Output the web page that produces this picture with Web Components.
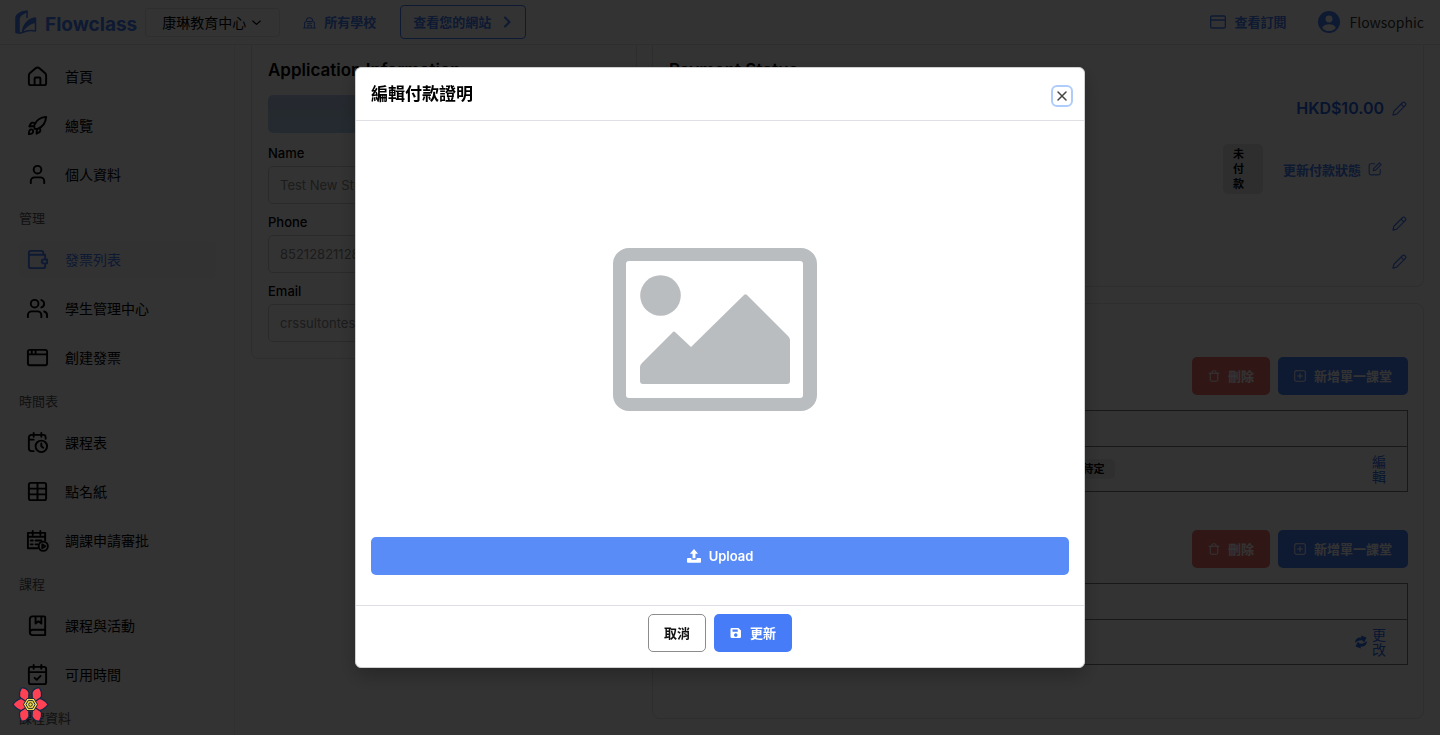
<!DOCTYPE html>
<html lang="zh-Hant">
<head>
<meta charset="utf-8">
<meta name="viewport" content="width=device-width, initial-scale=1">
<title>Flowclass</title>
<style>
  html, body { margin: 0; height: 100%; }
  body {
    overflow: hidden; background: #fff; color: #000;
    font-family: Inter, "Noto Sans CJK TC", sans-serif; font-size: 13px;
    --blue: #467cf7; --line: #e2e4e8;
  }
</style>
</head>
<body>
<fc-app></fc-app>
<script>
const ICONS = {
  home: '<path d="M3 11a3.500 3.500 0 0 1 1.200-2.700l5.500-4.700a3.500 3.500 0 0 1 4.600 0l5.500 4.700A3.500 3.500 0 0 1 21 11v8a2 2 0 0 1-2 2H5a2 2 0 0 1-2-2zM9 21v-7a1 1 0 0 1 1-1h4a1 1 0 0 1 1 1v7"/>',
  rocket: '<path d="M9 15.500 8.500 12C10 8 14 3.500 21 3c-.5 7-5 11-9 12.500L9 15.500zM9 9.500c-2-1-4-.5-4.500 1.500L3.500 13l5-.5M14.500 15c1 2 .5 4-1.500 4.500L11 20.500l.5-5M3 21c0-3 .5-5 2.500-5S8 18 7 19.500 4.500 20.800 3 21z"/>',
  user: '<circle cx="12" cy="7" r="4"/><path d="M5 21v-2a4 4 0 0 1 4-4h6a4 4 0 0 1 4 4v2"/>',
  wallet: '<path d="M20 11V7H3v12a2 2 0 0 0 2 2h13a2 2 0 0 0 2-2v-2M3 7V5a2 2 0 0 1 2-2h11a2 2 0 0 1 2 2v2M22 12h-3.500a2 2 0 0 0 0 4H22z"/>',
  users: '<circle cx="9" cy="7" r="4"/><path d="M2 21v-2a4 4 0 0 1 4-4h6a4 4 0 0 1 4 4v2M16 3.200a4 4 0 0 1 0 7.700M22 21v-2a4 4 0 0 0-3-3.900"/>',
  window: '<rect x="2" y="4" width="20" height="16" rx="2"/><path d="M2 8.700h20M6 4v4.500M10 4v4.500"/>',
  caltime: '<path d="M8 21H6a3 3 0 0 1-3-3V7a3 3 0 0 1 3-3h12a2.500 2.500 0 0 1 2.500 2.500V8M8 2v4M16 2v4M3 9h5"/><circle cx="16" cy="16" r="6"/><path d="M16 13v3l2 1.500"/>',
  table: '<rect x="3" y="3" width="18" height="18" rx="2"/><path d="M3 9h18M3 15h18M12 3v18"/>',
  calplay: '<path d="M12 20H2V4h18v8M2 8h18M7 2v4M15 2v4M5 12h2M10 12h6M5 16h2M10 16h2"/><circle cx="18" cy="18" r="4.800"/><path d="M17 16l3 2-3 2z"/>',
  book: '<path d="M20 16V3.500a1 1 0 0 0-1-1H7a3 3 0 0 0-3 3V19a3 3 0 0 0 3 3h13v-5.500H7a3 3 0 0 0-3 2.500M10 3v7l3-2.500 3 2.500V3"/>',
  calcheck: '<rect x="3" y="4" width="18" height="18" rx="2"/><path d="M3 9.500h18M8 2v4M16 2v4M9 15.500l2.200 2 4-4"/>',
  school: '<path d="M1 22h22M3 22V12l3-2c0-9 12-9 12 0l3 2v10M9 22v-5h6v5M8 10h8M8 13.500h8"/>',
  right: '<path d="M8 3l9 9-9 9"/>',
  down: '<path d="M2 8l10 9 10-9"/>',
  card: '<rect x="1" y="3" width="22" height="18" rx="2"/><path d="M2 9h20"/>',
  avatar: '<circle cx="12" cy="12" r="12" fill="currentColor" stroke="none"/><circle cx="12" cy="8.800" r="3.800" fill="#fff" stroke="none"/><path d="M4.500 18.500c1.500-3 4-4 7.500-4s6 1 7.500 4a10 10 0 0 1-15 0z" fill="#fff" stroke="none"/>',
  pencil: '<path d="M1.500 22.500l1.500-6L17 2.500a2.300 2.300 0 0 1 3.300 0l1.200 1.200a2.300 2.300 0 0 1 0 3.300L7.500 21zM14.500 5l4.500 4.500"/>',
  edit: '<path d="M11 3H5a3 3 0 0 0-3 3v13a3 3 0 0 0 3 3h13a3 3 0 0 0 3-3v-6M9 15l1-4 9.500-9.500 3 3L13 14z"/>',
  trash: '<path d="M2 6.500h20M4.500 6.500V20a2.500 2.500 0 0 0 2.500 2.500h10a2.500 2.500 0 0 0 2.500-2.500V6.500M8 6V4a2.500 2.500 0 0 1 2.500-2.500h3A2.500 2.500 0 0 1 16 4v2"/>',
  plus: '<rect x="1.500" y="1.500" width="21" height="21" rx="2.500"/><path d="M12 7v10M7 12h10"/>',
  x: '<path d="M4 4l16 16M20 4L4 20"/>',
  sync: '<g fill="currentColor" stroke="none"><path d="M0 14C0 6 6 2 13 3L12-1l11 4-5 10-3-4C9 8 5 10 0 14z"/><path d="M24 10c0 8-6 12-13 11l1 4-11-4 5-10 3 4c6 1 10-1 15-5z"/></g>',
  upload: '<g fill="currentColor" stroke="none"><path d="M12 0 5 8h4.500v8h5V8H19z"/><path d="M1.500 15.500H7.500V17a1.500 1.500 0 0 0 1.500 1.500h6a1.500 1.500 0 0 0 1.500-1.500v-1.500h6A1.500 1.500 0 0 1 24 17v5a1.500 1.500 0 0 1-1.500 1.500h-21A1.500 1.500 0 0 1 0 22v-5a1.500 1.500 0 0 1 1.500-1.500z"/></g>',
  save: '<path fill="currentColor" stroke="none" fill-rule="evenodd" d="M3.500 2H17l5 5v12.500a2.500 2.500 0 0 1-2.500 2.500h-16A2.500 2.500 0 0 1 1 19.500v-15A2.500 2.500 0 0 1 3.500 2zM5 5v4.500h10.500V5zM11.500 12.500a3.500 3.500 0 1 0 .1 0z"/>'
};

const make = (host, html) => {
  const t = document.createElement('template');
  t.innerHTML = html;
  host.attachShadow({ mode: 'open' }).append(t.content.cloneNode(true));
};
const define = (name, html) => customElements.define(name, class extends HTMLElement {
  constructor() { super(); make(this, typeof html === 'function' ? html(this) : html); }
});

customElements.define('fc-icon', class extends HTMLElement {
  connectedCallback() {
    if (this.shadowRoot) return;
    const s = this.getAttribute('size') || 24, w = this.getAttribute('weight') || 2;
    make(this, `<style>:host{display:inline-flex;flex:none}svg{display:block;overflow:visible}</style>
      <svg width="${s}" height="${s}" viewBox="0 0 24 24" fill="none" stroke="currentColor" stroke-width="${w}" stroke-linecap="round" stroke-linejoin="round" aria-hidden="true">${ICONS[this.getAttribute('name')]}</svg>`);
  }
});

/* Button; the variant attribute picks its colours. */
define('fc-button', `<style>
  :host { display: block; }
  button { box-sizing: border-box; width: 100%; height: 38px; padding: 0 15px; border: 1px solid transparent; border-radius: 5px;
    display: flex; align-items: center; justify-content: center; gap: 8px; font: inherit; font-weight: 600; font-size: 13px;
    line-height: 20px; color: #fff; background: var(--blue); white-space: nowrap; }
  :host([variant=danger]) button { background: #ee7370; }
  :host([variant=plain]) button { background: #fff; border-color: #8c8c8c; color: #111; }
  :host([variant=soft]) button { background: #5a8cf8; }
  :host([variant=outline]) button { height: 34px; padding: 0 12px; gap: 10px; background: none; border-color: var(--blue); color: var(--blue); border-radius: 4px; }
</style><button type="button"><slot></slot></button>`);

define('fc-header', `<style>
  :host { display: flex; align-items: center; box-sizing: border-box; height: 45px; flex: none; padding: 0 16px 0 15px; border-bottom: 1px solid var(--line); }
  .logo { display: flex; align-items: center; gap: 8px; color: var(--blue); font-size: 19px; font-weight: 700; line-height: 24px; text-decoration: none; }
  .logo span { padding-top: 5px; }
  .pick { position: relative; display: flex; margin-left: 8px; }
  select { appearance: none; box-sizing: border-box; width: 135px; height: 29px; padding: 0 16px; border: 1px solid var(--line); border-radius: 3px; background: #fff; font: inherit; font-size: 14px; color: #000; }
  .pick fc-icon { position: absolute; right: 19px; top: 10px; }
  .link { display: flex; align-items: center; gap: 8px; color: var(--blue); font-weight: 600; line-height: 20px; text-decoration: none; }
  .schools { margin: 0 24px 0 23px; }
  .right { margin-left: auto; display: flex; align-items: center; gap: 32px; }
  .me { display: flex; align-items: center; gap: 9px; color: var(--blue); }
  .me span { color: #333; font: 14px/20px "Noto Sans CJK TC", sans-serif; }
</style>
<a class="logo" href="#"><svg width="22" height="24" viewBox="0 0 22 24" fill="none" stroke="currentColor" stroke-width="1.500" stroke-linejoin="round" aria-hidden="true"><path fill="currentColor" d="M1 7v15.500l3 .5V9q0-4 8-7.500V1Q3 2 1 7z"/><path d="M12 1.500V8M4 23h3"/><path d="M7.500 22.500C8 15 13 8.500 20.500 8v13c-5-1-9-.5-13 1.500z"/><path fill="currentColor" stroke="none" d="M7.500 22.500C8 15 13 8.500 20.500 8v5c-6 1-10 5-13 9.500z"/></svg><span>Flowclass</span></a>
<label class="pick"><select aria-label="School"><option>康琳教育中心</option></select><fc-icon name="down" size="9" weight="3"></fc-icon></label>
<a class="link schools" href="#"><fc-icon name="school" size="13"></fc-icon>所有學校</a>
<fc-button variant="outline">查看您的網站<fc-icon name="right" size="12" weight="4"></fc-icon></fc-button>
<div class="right">
  <a class="link" href="#"><fc-icon name="card" size="16"></fc-icon>查看訂閱</a>
  <div class="me"><fc-icon name="avatar" size="22"></fc-icon><span>Flowsophic</span></div>
</div>`);

customElements.define('fc-nav-item', class extends HTMLElement {
  connectedCallback() {
    if (this.shadowRoot) return;
    make(this, `<style>
      :host { display: block; }
      a { display: flex; align-items: center; gap: 16px; height: 37px; padding-left: 7px; border-radius: 6px; color: #000; font-size: 14px; line-height: 20px; text-decoration: none; }
      :host([active]) a { color: var(--blue); background: #f8faff; }
    </style><a href="#"><fc-icon name="${this.getAttribute('icon')}" size="23"></fc-icon><slot></slot></a>`);
  }
});

define('fc-sidebar', `<style>
  :host { display: block; box-sizing: border-box; width: 235px; flex: none; overflow: hidden; padding: 13px 18px 0 19px; border-right: 1px solid #eceef2; background: #fcfcfd; }
  nav { display: flex; flex-direction: column; gap: 12px; }
  h2 { margin: 0; height: 24px; padding-top: 3px; box-sizing: border-box; font-size: 13px; font-weight: 400; line-height: 20px; color: #555; }
</style>
<nav>
  <fc-nav-item icon="home">首頁</fc-nav-item>
  <fc-nav-item icon="rocket">總覽</fc-nav-item>
  <fc-nav-item icon="user">個人資料</fc-nav-item>
  <h2>管理</h2>
  <fc-nav-item icon="wallet" active>發票列表</fc-nav-item>
  <fc-nav-item icon="users">學生管理中心</fc-nav-item>
  <fc-nav-item icon="window">創建發票</fc-nav-item>
  <h2>時間表</h2>
  <fc-nav-item icon="caltime">課程表</fc-nav-item>
  <fc-nav-item icon="table">點名紙</fc-nav-item>
  <fc-nav-item icon="calplay">調課申請審批</fc-nav-item>
  <h2>課程</h2>
  <fc-nav-item icon="book">課程與活動</fc-nav-item>
  <fc-nav-item icon="calcheck">可用時間</fc-nav-item>
  <h2>課程資料</h2>
</nav>`);

/* Bordered panel; "cut" marks one whose top is scrolled under the header. */
define('fc-card', `<style>
  :host { display: block; box-sizing: border-box; padding: 16px; border: 1px solid var(--line); border-radius: 8px; }
  :host([cut]) { border-top: 0; border-radius: 0 0 8px 8px; padding-top: 13px; }
</style><slot></slot>`);

customElements.define('fc-field', class extends HTMLElement {
  connectedCallback() {
    if (this.shadowRoot) return;
    make(this, `<style>
      :host { display: block; }
      label { display: block; margin-bottom: 4px; font-weight: 500; font-size: 13px; line-height: 18px; }
      input { box-sizing: border-box; width: 100%; height: 38px; padding: 0 11px; border: 1px solid #cfcfcf; border-radius: 5px; background: none; font: inherit; font-size: 13px; color: #8a8a8a; }
    </style><label for="f">${this.getAttribute('label')}</label><input id="f" value="${this.getAttribute('value')}" readonly>`);
  }
});

define('fc-applicant', `<style>
  h1 { margin: 0 0 13px; font-size: 17px; font-weight: 600; line-height: 24px; }
  .banner { height: 38px; border-radius: 5px; background: linear-gradient(#bccbe8, #b3d4ee); margin-bottom: 11px; }
  .fields { display: flex; flex-direction: column; gap: 9px; }
</style>
<fc-card cut><h1>Application Information</h1><div class="banner"></div>
<div class="fields">
  <fc-field label="Name" value="Test New Student"></fc-field>
  <fc-field label="Phone" value="85212821128"></fc-field>
  <fc-field label="Email" value="crssultontest@gmail.com"></fc-field>
</div></fc-card>`);

define('fc-payment', `<style>
  fc-card { padding-bottom: 12px; }
  h1 { margin: 0 0 13px; font-size: 17px; font-weight: 600; line-height: 24px; }
  .row { display: flex; justify-content: flex-end; align-items: center; gap: 8px; height: 26px; color: var(--blue); }
  .row + .row { margin-top: 12px; }
  .row.state { height: 72px; gap: 20px; padding-right: 25px; }
  .row.state + .row { margin-top: 5px; }
  .price { color: #2563eb; font-size: 16px; font-weight: 600; }
  .badge { box-sizing: border-box; width: 40px; padding: 3px 18px 2px 10px; border-radius: 5px; background: #e4e4e8; color: #000; font-size: 11px; font-weight: 600; line-height: 15px; }
  button { padding: 0; border: 0; background: none; display: flex; align-items: center; gap: 7px; font: inherit; font-weight: 600; color: inherit; }
</style>
<fc-card cut><h1>Payment Status</h1>
  <div class="row"><span class="price">HKD$10.00</span><button type="button" aria-label="Edit amount"><fc-icon name="pencil" size="15"></fc-icon></button></div>
  <div class="row state"><span class="badge">未付款</span><button type="button">更新付款狀態<fc-icon name="edit" size="14"></fc-icon></button></div>
  <div class="row"><button type="button" aria-label="Edit method"><fc-icon name="pencil" size="15"></fc-icon></button></div>
  <div class="row"><button type="button" aria-label="Edit proof"><fc-icon name="pencil" size="15"></fc-icon></button></div>
</fc-card>`);

define('fc-lessons', `<style>
  :host { display: block; }
  .tools { display: flex; justify-content: flex-end; gap: 8px; margin-bottom: 15px; }
  ::slotted(table) { width: 100%; }
</style>
<div class="tools">
  <fc-button variant="danger"><fc-icon name="trash" size="12"></fc-icon>刪除</fc-button>
  <fc-button><fc-icon name="plus" size="12"></fc-icon>新增單一課堂</fc-button>
</div><slot></slot>`);

define('fc-schedule', `<style>
  fc-card { padding: 53px 15px; }
  fc-lessons + fc-lessons { margin-top: 38px; }
  table { border-collapse: collapse; border: 1px solid #777; table-layout: fixed; }
  tr { border-bottom: 1px solid #777; }
  th { height: 36px; padding: 0; box-sizing: border-box; }
  td { height: 45px; box-sizing: border-box; padding: 0 16px; text-align: right; }
  .last { width: 277px; padding: 0 20px; }
  .chip { display: inline-block; padding: 2px 10px; border-radius: 5px; background: #e9ebef; font-size: 11px; font-weight: 600; line-height: 16px; }
  a { display: inline-flex; align-items: center; gap: 5px; color: #2f6df0; font-size: 14px; line-height: 15px; text-align: left; text-decoration: none; vertical-align: middle; }
  a span { width: 15px; }
</style>
<fc-card>
  <fc-lessons><table><tr><th></th><th class="last"></th></tr><tr><td><span class="chip">待定</span></td><td class="last"><a href="#"><span>編輯</span></a></td></tr></table></fc-lessons>
  <fc-lessons><table><tr><th></th><th class="last"></th></tr><tr><td></td><td class="last"><a href="#"><fc-icon name="sync" size="12"></fc-icon><span>更改</span></a></td></tr></table></fc-lessons>
</fc-card>`);

define('fc-dialog', `<style>
  :host { position: fixed; inset: 0; display: flex; align-items: center; justify-content: center; background: rgba(0,0,0,.8); }
  section { box-sizing: border-box; width: min(730px, 94%); border: 1px solid #d0d0d0; border-radius: 6px; background: #fff; box-shadow: 0 8px 20px rgba(0,0,0,.25); overflow: hidden; }
  header { display: flex; align-items: center; justify-content: space-between; height: 52px; padding: 0 11px 0 15px; border-bottom: 1px solid #dfe0e6; }
  h1 { margin: 0; font-size: 17px; font-weight: 600; line-height: 24px; }
  .close { box-sizing: border-box; width: 22px; height: 22px; margin-top: 4px; padding: 0; border: 2px solid #b0ccfb; border-radius: 6px; background: #fff; color: #444; display: flex; align-items: center; justify-content: center; }
  .body { display: flex; flex-direction: column; gap: 16px; padding: 16px 15px 30px; }
  .body svg { display: block; align-self: center; }
  footer { display: flex; justify-content: center; gap: 8px; padding: 8px 15px 15px; border-top: 1px solid #dfe0e6; }
</style>
<section role="dialog" aria-labelledby="t">
  <header><h1 id="t">編輯付款證明</h1><button class="close" type="button" aria-label="Close"><fc-icon name="x" size="12" weight="3"></fc-icon></button></header>
  <div class="body">
    <svg width="384" height="384" viewBox="0 0 384 384" fill="#b9bdc0" role="img" aria-label="Placeholder">
      <path fill-rule="evenodd" d="M101 111H273a16 16 0 0 1 16 16V258a16 16 0 0 1-16 16H101a16 16 0 0 1-16-16V127a16 16 0 0 1 16-16zM101 124a3 3 0 0 0-3 3V258a3 3 0 0 0 3 3H272a3 3 0 0 0 3-3V127a3 3 0 0 0-3-3z"/>
      <circle cx="132.500" cy="158.500" r="20.300"/>
      <path d="M112 230q0-2 2-4l31-31q1-1 2 0l16 15 53-52q1.500-1.500 3 0l41 41q2 2 2 4v41q0 3-3 3H115q-3 0-3-3z"/>
    </svg>
    <fc-button variant="soft"><fc-icon name="upload" size="14"></fc-icon>Upload</fc-button>
  </div>
  <footer><fc-button variant="plain">取消</fc-button><fc-button><fc-icon name="save" size="12"></fc-icon>更新</fc-button></footer>
</section>`);

define('fc-devtools', () => {
  const side = 'M3-2 9-6Q14-5 17.500 0 14 5 9 6L3 2z';
  const corner = 'M2-2 1.500-12Q4-17 9-16.500 11.500-13 11-8L6-2z';
  const petals = [[1, 1], [-1, 1], [1, -1], [-1, -1]].map(([x, y]) => `<path transform="scale(${x} ${y})" d="${corner}"/>`).join('')
    + `<path d="${side}"/><path transform="scale(-1 1)" d="${side}"/>`;
  return `<style>
    :host { position: fixed; left: 12px; bottom: 12px; z-index: 2; }
    button { display: block; padding: 0; border: 0; background: none; }
    svg { display: block; overflow: visible; }
  </style><button type="button" aria-label="Query devtools"><svg width="37" height="37" viewBox="-18.500 -18.500 37 37">
    <g fill="#ff4154" stroke="#0a2947" stroke-width="1.200" stroke-linejoin="round">${petals}</g>
    <g fill="#f4dc55" stroke="#1c2b33" stroke-width="1"><path d="M-7 0-3.500-6h7L7 0 3.500 6h-7z"/><path d="M-4.500 0-2.300-3.900h4.600L4.500 0 2.300 3.900h-4.600z"/><circle r="1.800"/></g>
  </svg></button>`;
});

define('fc-app', `<style>
  :host { display: flex; flex-direction: column; height: 100vh; overflow: hidden; }
  .main { display: flex; flex: 1; min-height: 0; }
  .content { flex: 1; min-width: 0; display: grid; grid-template-columns: 1fr 2fr; gap: 15px; align-items: start; padding: 0 16px; overflow: hidden; }
  .col { display: flex; flex-direction: column; gap: 16px; min-width: 0; }
</style>
<fc-header></fc-header>
<div class="main"><fc-sidebar></fc-sidebar>
  <div class="content"><fc-applicant></fc-applicant><div class="col"><fc-payment></fc-payment><fc-schedule></fc-schedule></div></div>
</div>
<fc-dialog></fc-dialog>
<fc-devtools></fc-devtools>`);
</script>
</body>
</html>
